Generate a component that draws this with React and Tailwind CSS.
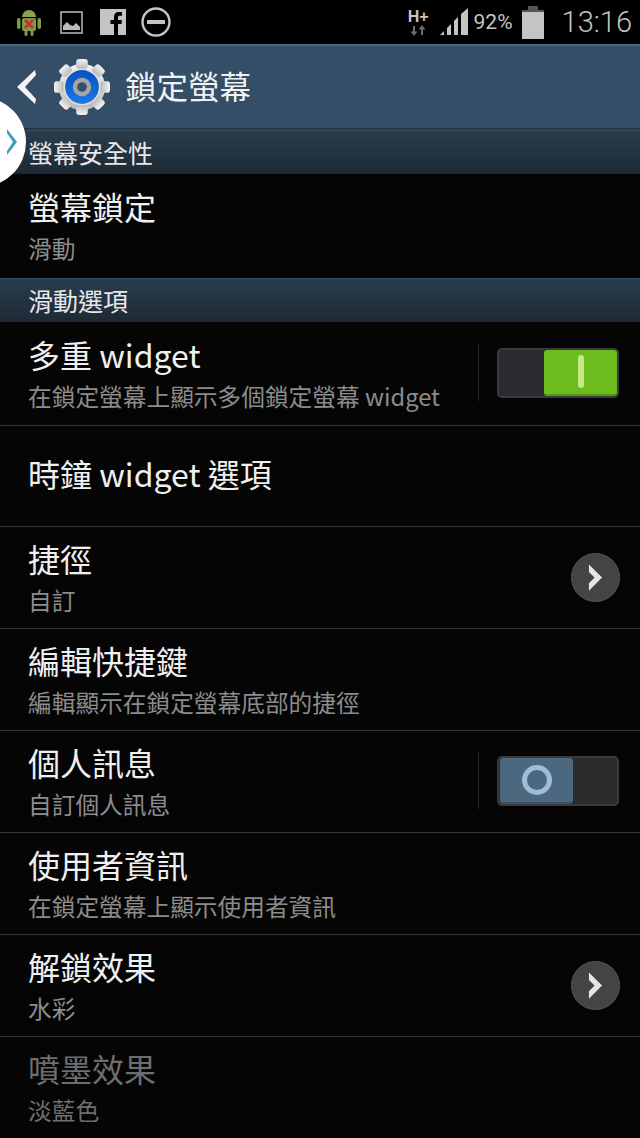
const font = { fontFamily: '"Noto Sans CJK TC", "Noto Sans", sans-serif' }

const Section = ({ title }) => (
  <div className="h-[44px] flex items-center pl-[28px] bg-gradient-to-b from-[#2a3c4b] to-[#1d2a35] border-t border-[#3a4f60] text-[25px] leading-none text-[#e8e8e8]">
    <span className="-mt-[1px]">{title}</span>
  </div>
)

const Arrow = () => (
  <div className="w-[49px] h-[49px] rounded-full bg-[#444444] border border-[#555555] flex items-center justify-center">
    <svg width="15" height="27" viewBox="0 0 16 28">
      <path d="M1 0 L15 14 L1 28 L1 20 L7 14 L1 8 Z" fill="#e6e6e6" />
    </svg>
  </div>
)

const SwitchOn = () => (
  <div className="flex items-center h-[57px] mr-px -translate-y-px">
    <div className="w-px h-[57px] bg-[#2a2a2a] mr-[18px]" />
    <div className="w-[122px] h-[50px] rounded-[5px] border-2 border-[#3a3a3c] bg-[#2a2b2f] flex justify-end">
      <div className="w-[73px] h-[46px] rounded-[3px] bg-[#6cbc1e] border-b-2 border-[#559a14] flex items-center justify-center">
        <div className="w-[6px] h-[33px] rounded-full bg-[#c3ea84]" />
      </div>
    </div>
  </div>
)

const SwitchOff = () => (
  <div className="flex items-center h-[57px] mr-px -translate-y-px">
    <div className="w-px h-[57px] bg-[#2a2a2a] mr-[18px]" />
    <div className="w-[122px] h-[50px] rounded-[5px] border-2 border-[#3a3a3c] bg-[#2a2b2d] flex justify-start">
      <div className="w-[73px] h-[46px] rounded-[3px] bg-[#4c687f] border-b-2 border-[#3c5366] flex items-center justify-center ml-px">
        <div className="w-[30px] h-[30px] rounded-full border-[5px] border-[#9fbdd6]" />
      </div>
    </div>
  </div>
)

const Row = ({ title, sub, right, disabled, last, height = 'h-[102px]' }) => (
  <div className={`${height} flex items-center justify-between pl-[28px] pr-[20px] ${last ? '' : 'border-b border-[#363636]'}`}>
    <div>
      <div className={`text-[32px] leading-[40px] -mt-[2px] ${sub ? '' : 'mb-[4px]'} ${disabled ? 'text-[#6e6e6e]' : 'text-[#f0f0f0]'}`}>{title}</div>
      {sub && <div className={`text-[23.7px] leading-[32px] mt-[6px] ${disabled ? 'text-[#6e6e6e]' : 'text-[#8c8c8c]'}`}>{sub}</div>}
    </div>
    {right}
  </div>
)

const StatusBar = () => (
  <div className="h-[44px] bg-black flex items-center justify-between pl-[17px] pr-[8px]">
    <div className="flex items-center gap-[19px]">
      <svg width="24" height="27" viewBox="0 0 24 27">
        <rect x="0" y="9" width="3.5" height="11" rx="1.7" fill="#7d9a4a" />
        <rect x="20.5" y="9" width="3.5" height="11" rx="1.7" fill="#7d9a4a" />
        <path d="M5 8 a7 7 0 0 1 14 0 Z" fill="#8aa552" />
        <rect x="5" y="9" width="14" height="13" rx="2" fill="#7d9a4a" />
        <rect x="7.5" y="21" width="3" height="6" rx="1.5" fill="#7d9a4a" />
        <rect x="13.5" y="21" width="3" height="6" rx="1.5" fill="#7d9a4a" />
        <path d="M8 11 L16 19 M16 11 L8 19" stroke="#c8302c" strokeWidth="2.6" />
      </svg>
      <svg width="23" height="23" viewBox="0 0 23 23">
        <rect x="1" y="1" width="21" height="21" fill="none" stroke="#bdbdbd" strokeWidth="1.5" />
        <path d="M3 19 L3 15 L7 11 L10 14 L13 15 L16 12 L20 16 L20 19 Z" fill="#bdbdbd" />
      </svg>
      <svg width="26" height="26" viewBox="0 0 26 26" className="-ml-[2px]">
        <path d="M0 0 H26 V26 H18 V15 H21.5 L22 11 H18 V8.5 C18 7.4 18.5 6.8 19.8 6.8 H22 V3.2 C21 3 20 3 18.8 3 C15.8 3 14 4.8 14 8 V11 H10.5 V15 H14 V26 H0 Z" fill="#c4c4c4" />
      </svg>
      <svg width="30" height="30" viewBox="0 0 30 30" className="-ml-[4px]">
        <circle cx="15" cy="15" r="13.5" fill="none" stroke="#c4c4c4" strokeWidth="2.4" />
        <rect x="6" y="13" width="18" height="4" fill="#c4c4c4" />
      </svg>
    </div>
    <div className="flex items-center">
      <div className="flex flex-col items-center mr-[11px]">
        <span className="text-[16px] leading-[16px] font-bold text-[#c4c4c4]" style={{ fontFamily: '"Liberation Sans", sans-serif' }}>H+</span>
        <svg width="16" height="11" viewBox="0 0 16 11">
          <path d="M4 11 L0.5 6.5 H3 V1 H5 V6.5 H7.5 Z M12 0 L15.5 4.5 H13 V10 H11 V4.5 H8.5 Z" fill="#6e6e6e" />
        </svg>
      </div>
      <svg width="28" height="28" viewBox="0 0 28 28" className="mr-[6px]">
        <path d="M0 27 L4 23 V27 Z M7 20 L11 16 V27 H7 Z M14 13 L18 9 V27 H14 Z M21 6 L28 0 V27 H21 Z" fill="#c4c4c4" />
      </svg>
      <span className="text-[21px] leading-none text-[#c4c4c4] mr-[9px]" style={{ fontFamily: '"Roboto", sans-serif' }}>92%</span>
      <svg width="22" height="33" viewBox="0 0 22 33" className="mr-[18px]">
        <rect x="6" y="0" width="10" height="4" fill="#555555" />
        <rect x="0" y="4" width="22" height="2" fill="#555555" />
        <rect x="0" y="6" width="22" height="27" fill="#c4c4c4" />
      </svg>
      <span className="text-[29px] leading-none text-[#c4c4c4]" style={{ fontFamily: '"Roboto", sans-serif', fontWeight: 300 }}>13:16</span>
    </div>
  </div>
)

const ActionBar = () => (
  <div className="h-[86px] bg-[#334e66] border-t-2 border-[#4a6478] border-b-2 border-b-[#24384a] flex items-center pl-[17px]">
    <svg width="20" height="34" viewBox="0 0 20 34">
      <path d="M18 0 L0 17 L18 34 L19 29 L8 17 L19 5 Z" fill="#f4f4f4" />
    </svg>
    <svg width="56" height="56" viewBox="0 0 58 58" className="ml-[17px]">
      <defs>
        <linearGradient id="gear" x1="0" y1="0" x2="0" y2="1">
          <stop offset="0" stopColor="#f4f4f4" />
          <stop offset="1" stopColor="#b9b9b9" />
        </linearGradient>
        <linearGradient id="blue" x1="0" y1="0" x2="0" y2="1">
          <stop offset="0" stopColor="#0a50c0" />
          <stop offset="1" stopColor="#1a78e8" />
        </linearGradient>
      </defs>
      <g fill="url(#gear)">
        <circle cx="29" cy="29" r="24" />
        {[0, 45, 90, 135, 180, 225, 270, 315].map((a) => (
          <rect key={a} x="23" y="0" width="12" height="10" rx="3" transform={`rotate(${a} 29 29)`} />
        ))}
      </g>
      <circle cx="29" cy="29" r="19" fill="#e0e0e0" />
      <circle cx="29" cy="29" r="17.5" fill="url(#blue)" />
      <circle cx="29" cy="29" r="9.5" fill="#a5a5a5" />
      <circle cx="29" cy="29" r="5" fill="#335070" />
    </svg>
    <span className="text-[31.5px] leading-none text-[#f2f2f2] ml-[15px] -mt-[3px]">鎖定螢幕</span>
  </div>
)

const App = () => (
  <div className="relative w-[640px] h-[1138px] overflow-hidden bg-[#050505]" style={font}>
    <StatusBar />
    <ActionBar />
    <Section title="螢幕安全性" />
    <Row title="螢幕鎖定" sub="滑動" last height="h-[104px]" />
    <Section title="滑動選項" />
    <Row title="多重 widget" sub="在鎖定螢幕上顯示多個鎖定螢幕 widget" right={<SwitchOn />} height="h-[104px]" />
    <Row title="時鐘 widget 選項" height="h-[101px]" />
    <Row title="捷徑" sub="自訂" right={<Arrow />} />
    <Row title="編輯快捷鍵" sub="編輯顯示在鎖定螢幕底部的捷徑" />
    <Row title="個人訊息" sub="自訂個人訊息" right={<SwitchOff />} />
    <Row title="使用者資訊" sub="在鎖定螢幕上顯示使用者資訊" />
    <Row title="解鎖效果" sub="水彩" right={<Arrow />} />
    <Row title="噴墨效果" sub="淡藍色" disabled last />

    {/* floating side handle */}
    <div className="absolute left-[-64px] top-[97px] w-[90px] h-[90px] rounded-full bg-white flex items-center justify-end pr-[8px]">
      <svg width="11" height="26" viewBox="0 0 11 26">
        <path d="M0 0 L10 13 L0 26 L0 22 L6 13 L0 4 Z" fill="#3d9ec4" />
      </svg>
    </div>
  </div>
)

export default App
